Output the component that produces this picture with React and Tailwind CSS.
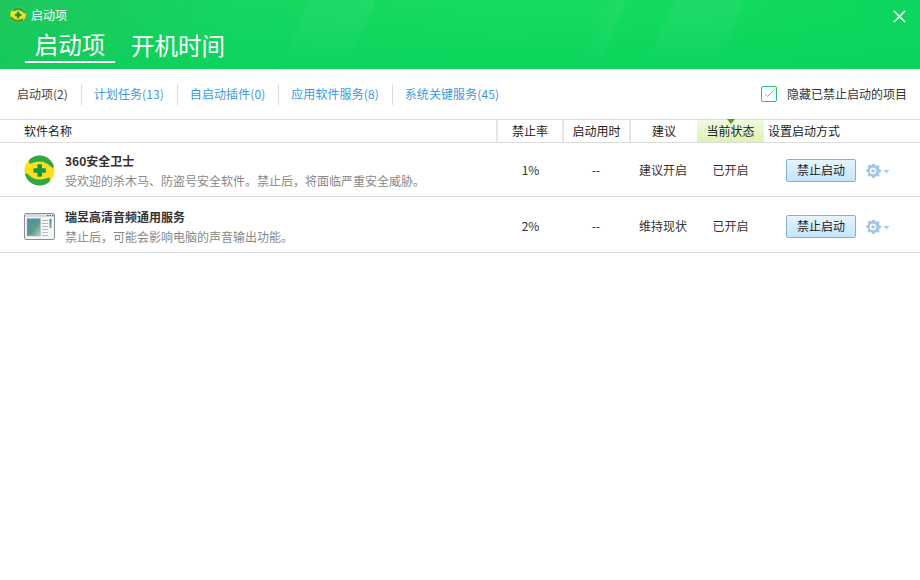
import { X, Check } from "lucide-react";

const tabs = ["启动项(2)", "计划任务(13)", "自启动插件(0)", "应用软件服务(8)", "系统关键服务(45)"];

const rows = [
  {
    name: "360安全卫士",
    desc: "受欢迎的杀木马、防盗号安全软件。禁止后，将面临严重安全威胁。",
    rate: "1%",
    advice: "建议开启",
    icon: "guard",
  },
  {
    name: "瑞昱高清音频通用服务",
    desc: "禁止后，可能会影响电脑的声音输出功能。",
    rate: "2%",
    advice: "维持现状",
    icon: "window",
  },
];

function GuardIcon({ size }) {
  return (
    <svg width={size} height={size} viewBox="0 0 32 32">
      <circle cx="16" cy="16" r="15.5" fill="#ffdc1f" />
      {/* top and bottom green bands, offset like an S */}
      <path d="M6.2 4A15.5 15.5 0 0 1 31 12.2C30 13.6 28.6 13 27 11.4C24.4 8.8 20.6 6.6 16.4 6.6C12.2 6.6 9 8 6.6 8.8C5 9.2 4.6 5.6 6.2 4Z" fill="#2aa84a" />
      <path d="M25.8 28A15.5 15.5 0 0 1 1 19.8C2 18.4 3.4 19 5 20.6C7.6 23.2 11.4 25.4 15.6 25.4C19.8 25.4 23 24 25.4 23.2C27 22.8 27.4 26.4 25.8 28Z" fill="#2aa84a" />
      <rect x="13.8" y="9.6" width="4.8" height="12.8" rx="1" fill="#18983c" />
      <rect x="9.8" y="13.6" width="12.8" height="4.8" rx="1" fill="#18983c" />
    </svg>
  );
}

function WindowIcon() {
  return (
    <svg width="31" height="27" viewBox="0 0 31 27">
      <rect x="0.5" y="0.5" width="30" height="26" rx="1.5" fill="#f4f5f6" stroke="#8a9097" />
      <rect x="1" y="1" width="29" height="3" fill="#d5d9de" />
      <rect x="23" y="2" width="1.5" height="1" fill="#666" />
      <rect x="25.5" y="2" width="1.5" height="1" fill="#666" />
      <rect x="28" y="2" width="1.5" height="1" fill="#666" />
      <defs>
        <linearGradient id="pane" x1="0" y1="0" x2="1" y2="1">
          <stop offset="0" stopColor="#4a8bb0" />
          <stop offset="0.55" stopColor="#5f9a88" />
          <stop offset="1" stopColor="#b4cec8" />
        </linearGradient>
        <linearGradient id="bar" x1="0" y1="0" x2="0" y2="1">
          <stop offset="0" stopColor="#3f7fb0" />
          <stop offset="1" stopColor="#7fbf6a" />
        </linearGradient>
      </defs>
      <rect x="3" y="5.5" width="13.5" height="17.5" fill="url(#pane)" stroke="#a9b3ba" strokeWidth="0.5" />
      <rect x="18" y="7" width="6" height="1" fill="#b5babf" />
      <rect x="18" y="10" width="6" height="1" fill="#b5babf" />
      <rect x="18" y="13" width="6" height="1" fill="#b5babf" />
      <rect x="18" y="16" width="6" height="1" fill="#b5babf" />
      <rect x="18" y="19" width="6" height="1" fill="#b5babf" />
      <rect x="18" y="22" width="6" height="1" fill="#b5babf" />
      <rect x="25.5" y="6" width="2" height="9" fill="url(#bar)" />
    </svg>
  );
}

function GearIcon() {
  return (
    <svg width="24" height="14" viewBox="0 0 24 14" className="ml-[10px] mt-[2px]">
      <g fill="#a6c6e6">
        <path d="M7 0.5l1.3 0 .5 1.8 1.4.6 1.7-.9 1.6 1.6-.9 1.7.6 1.4 1.8.5v2.3l-1.8.5-.6 1.4.9 1.7-1.6 1.6-1.7-.9-1.4.6-.5 1.8H5.5l-.5-1.8-1.4-.6-1.7.9-1.6-1.6.9-1.7-.6-1.4L-1.2 9V6.7l1.8-.5.6-1.4-.9-1.7 1.6-1.6 1.7.9 1.4-.6.5-1.8Z" transform="translate(1.3 -0.8) scale(0.92)" />
        <path d="M17.5 6h6l-3 3.2Z" />
      </g>
      <circle cx="7" cy="7" r="3.2" fill="#fff" />
      <circle cx="7" cy="7" r="1.8" fill="#a6c6e6" />
    </svg>
  );
}

function HeaderCell({ className, children }) {
  return (
    <div className={"flex h-full items-center justify-center border-l-2 border-l-[#e6e6e6] " + className}>
      {children}
    </div>
  );
}

export default function App() {
  return (
    <div className="flex h-[580px] w-[920px] flex-col overflow-hidden bg-white font-['Noto_Sans_CJK_SC','Liberation_Sans',sans-serif] text-xs text-[#333]">
      {/* Header */}
      <div className="relative h-[69px] shrink-0 bg-[linear-gradient(90deg,rgba(30,192,90,0.55)_0%,transparent_230px),linear-gradient(180deg,transparent_15%,rgba(10,212,92,0.9)_100%),linear-gradient(113deg,transparent_284px,rgba(255,255,255,0.045)_286px,rgba(255,255,255,0.045)_345px,transparent_347px,transparent_550px,rgba(255,255,255,0.05)_574px,transparent_578px,transparent_619px,rgba(255,255,255,0.045)_623px,rgba(255,255,255,0.045)_684px,transparent_688px),linear-gradient(90deg,#1ad05f_0%,#14d660_25%,#16db60_55%,#12d95f_80%,#0cd65e_100%)] text-white">
        <div className="flex h-[30px] items-center pl-[10px]">
          <GuardIcon size={16} />
          <span className="ml-[5px] text-xs">启动项</span>
        </div>
        <div className="flex pl-[25px]">
          <div className="flex h-[33px] w-[90px] items-center justify-center border-b-2 border-white pb-[2px] text-[23.5px]">启动项</div>
          <div className="ml-[16px] flex h-[33px] items-center pb-[2px] text-[23.5px]">开机时间</div>
        </div>
        <X className="absolute right-[10px] top-[6px] h-[21px] w-[21px]" strokeWidth={1.7} />
      </div>

      {/* Category tabs */}
      <div className="flex h-[50px] shrink-0 items-center pl-[17px] pr-[13px]">
        {tabs.map((tab, i) => (
          <div key={tab} className="flex items-center">
            {i > 0 && <div className="ml-[13px] mr-[12px] h-[21px] w-px bg-[#dcdcdc]" />}
            <span className={i === 0 ? "text-[#444]" : "tracking-[0.08px] text-[#3b98e6]"}>{tab}</span>
          </div>
        ))}
        <div className="ml-auto flex items-center">
          <div className="flex h-4 w-4 items-center justify-center rounded-[2px] border border-[#20c864]">
            <Check className="h-3 w-3 text-[#20c864]" strokeWidth={1.5} />
          </div>
          <span className="ml-[10px]">隐藏已禁止启动的项目</span>
        </div>
      </div>

      {/* Table head */}
      <div className="flex h-[24px] shrink-0 items-center border-y border-[#dcdcdc] text-[#222]">
        <div className="w-[496px] pl-[24px]">软件名称</div>
        <HeaderCell className="w-[66px]">禁止率</HeaderCell>
        <HeaderCell className="w-[67px]">启动用时</HeaderCell>
        <HeaderCell className="w-[68px]">建议</HeaderCell>
        <div className="relative flex h-full w-[67px] items-center justify-center bg-[linear-gradient(#f0fadf,#dcf3b5)]">
          当前状态
          <div className="absolute -top-px left-1/2 h-0 w-0 -translate-x-1/2 border-x-[4px] border-t-[5px] border-x-transparent border-t-[#4c9a2a]" />
        </div>
        <div className="pl-[4px]">设置启动方式</div>
      </div>

      {/* Rows */}
      {rows.map((row, i) => (
        <div key={row.name} className={"flex shrink-0 items-center border-b border-[#dcdcdc] " + (i === 0 ? "h-[54px] pt-[1px]" : "h-[56px] pt-[3px]")}>
          <div className="flex w-[498px] items-center">
            <div className="flex w-[65px] pl-[24px]">
              {row.icon === "guard" ? <GuardIcon size={31} /> : <WindowIcon />}
            </div>
            <div className="pt-[1px]">
              <div className="font-bold leading-[20px] text-[#333]">{row.name}</div>
              <div className="leading-[20px] text-[#888]">{row.desc}</div>
            </div>
          </div>
          <div className="w-[65px] text-center">{row.rate}</div>
          <div className="w-[66px] text-center">--</div>
          <div className="w-[68px] text-center">{row.advice}</div>
          <div className="w-[67px] text-center">已开启</div>
          <button className="ml-[22px] h-[23px] w-[70px] rounded-[2px] border border-[#7fb0d6] bg-[linear-gradient(#e6f4fe,#c5e5fb)] text-xs text-[#222]">
            禁止启动
          </button>
          <GearIcon />
        </div>
      ))}
    </div>
  );
}
